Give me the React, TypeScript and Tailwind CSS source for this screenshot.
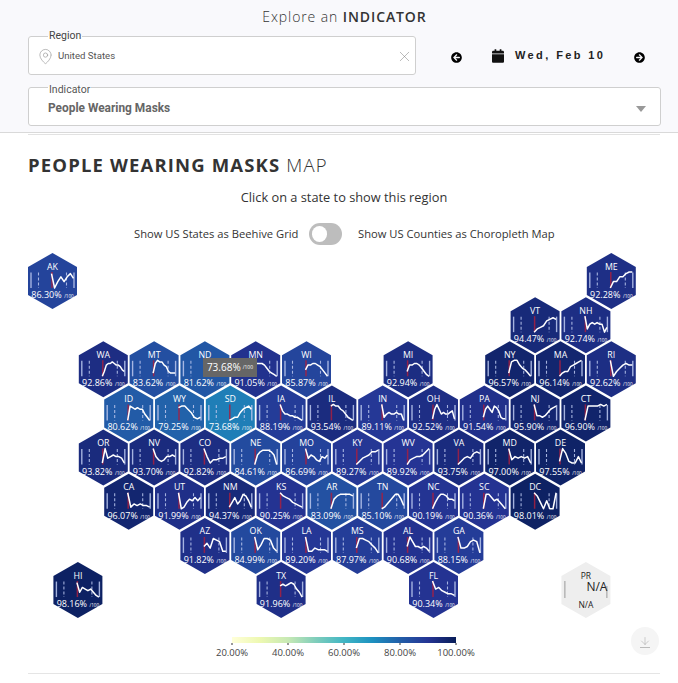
import React from "react";
import { FaArrowCircleLeft, FaArrowCircleRight, FaCalendar } from "react-icons/fa";
import { MapPin, X, ArrowDown } from "lucide-react";

type St = [string, number, number, number, number[]];

const STATES: St[] = [
  ["AK", 0, 0, 86.3, [1, 10, 6, 3, 6, 3, 1, 4]],
  ["ME", 22, 0, 92.28, [10, 6, 6, 3, 3, 1, 0, 0]],
  ["VT", 19, 1, 94.47, [10, 8, 7, 6, 3, 2, 1, 2]],
  ["NH", 21, 1, 92.74, [0, 8, 5, 4, 5, 4, 5, 5, 10, 7]],
  ["WA", 2, 2, 92.86, [10, 7, 3, 2, 2, 1, 2, 3, 3, 4, 6, 7]],
  ["MT", 4, 2, 83.62, [8, 2, 0, 1, 1, 3, 4, 7, 8, 8, 8]],
  ["ND", 6, 2, 81.62, [7, 3, 5, 6, 6, 7, 7, 8, 8]],
  ["MN", 8, 2, 91.05, [3, 2, 2, 2, 3, 5, 7, 8, 9, 10]],
  ["WI", 10, 2, 85.87, [6, 3, 3, 2, 2, 3, 4, 6, 8, 10]],
  ["MI", 14, 2, 92.94, [7, 3, 3, 2, 2, 3, 5, 7, 9, 10]],
  ["NY", 18, 2, 96.57, [8, 1, 0, 0, 3, 5, 6, 8, 10]],
  ["MA", 20, 2, 96.14, [10, 8, 7, 7, 4, 3, 2, 1, 0]],
  ["RI", 22, 2, 92.62, [0, 10, 7, 5, 3, 2, 3, 3]],
  ["ID", 3, 3, 80.62, [10, 1, 2, 3, 2, 3, 3, 6, 8, 10]],
  ["WY", 5, 3, 79.25, [2, 1, 1, 3, 5, 8, 9, 8]],
  ["SD", 7, 3, 73.68, [10, 9, 8, 8, 5, 3, 2, 1, 3]],
  ["IA", 9, 3, 88.19, [0, 4, 6, 6, 7, 7, 8, 8, 9, 10]],
  ["IL", 11, 3, 93.54, [1, 0, 1, 1, 3, 4, 6, 8, 9, 10]],
  ["IN", 13, 3, 89.11, [0, 8, 6, 5, 6, 6, 5, 6, 6, 10]],
  ["OH", 15, 3, 92.52, [9, 3, 0, 3, 6, 5, 6, 6, 5, 4, 9]],
  ["PA", 17, 3, 91.54, [8, 3, 1, 3, 5, 1, 2, 4, 8, 9, 9]],
  ["NJ", 19, 3, 95.9, [0, 7, 7, 8, 7, 5, 3, 2, 1]],
  ["CT", 21, 3, 96.9, [10, 1, 1, 1, 1, 0, 1, 0]],
  ["OR", 2, 4, 93.82, [9, 0, 6, 5, 4, 5, 5, 6, 9]],
  ["NV", 4, 4, 93.7, [0, 5, 7, 8, 7, 5, 5, 4, 5]],
  ["CO", 6, 4, 92.82, [0, 5, 9, 7, 7, 6, 6, 5]],
  ["NE", 8, 4, 84.61, [10, 4, 2, 1, 1, 1, 2, 4, 10]],
  ["MO", 10, 4, 86.69, [0, 6, 4, 5, 7, 8, 5, 6, 4]],
  ["KY", 12, 4, 89.27, [10, 8, 6, 5, 4, 2, 2, 1]],
  ["WV", 14, 4, 89.92, [10, 7, 6, 5, 5, 4, 2, 0]],
  ["VA", 16, 4, 93.75, [10, 8, 6, 5, 6, 3, 2, 3]],
  ["MD", 18, 4, 97.0, [0, 7, 5, 6, 5, 6, 5, 9]],
  ["DE", 20, 4, 97.55, [8, 0, 3, 8, 9, 9, 5, 9]],
  ["CA", 3, 5, 96.07, [0, 9, 7, 8, 7, 8, 8, 9]],
  ["UT", 5, 5, 91.99, [0, 10, 9, 6, 4, 5, 3, 5, 3]],
  ["NM", 7, 5, 94.37, [9, 6, 3, 7, 5, 1, 2, 5, 9]],
  ["KS", 9, 5, 90.25, [0, 2, 3, 4, 6, 7, 8, 9]],
  ["AR", 11, 5, 83.09, [10, 4, 2, 1, 1, 1, 1, 2]],
  ["TN", 13, 5, 85.1, [10, 9, 7, 5, 3, 1, 1, 4, 8]],
  ["NC", 15, 5, 90.19, [10, 6, 3, 1, 1, 2, 4, 4, 5]],
  ["SC", 17, 5, 90.36, [10, 1, 1, 3, 5, 4, 6, 8, 10]],
  ["DC", 19, 5, 98.01, [0, 2, 6, 10, 5, 10, 10, 0]],
  ["AZ", 6, 6, 91.82, [6, 4, 7, 1, 2, 3, 9, 9]],
  ["OK", 8, 6, 84.99, [0, 8, 5, 1, 1, 2, 7, 9]],
  ["LA", 10, 6, 89.2, [0, 9, 9, 7, 8, 8, 8, 9]],
  ["MS", 12, 6, 87.97, [7, 1, 1, 2, 3, 5, 7, 10]],
  ["AL", 14, 6, 90.68, [6, 0, 3, 6, 6, 7, 6, 7, 9]],
  ["GA", 16, 6, 88.15, [0, 7, 7, 6, 3, 2, 3, 10]],
  ["TX", 9, 7, 91.96, [3, 2, 3, 2, 1, 2, 5, 7, 10]],
  ["FL", 15, 7, 90.34, [0, 5, 4, 6, 7, 8, 8, 9]],
  ["HI", 1, 7, 98.16, [1, 7, 4, 5, 6, 5, 7, 9, 10]],
];

const STOPS = [
  [255, 255, 217],
  [237, 248, 177],
  [199, 233, 180],
  [127, 205, 187],
  [65, 182, 196],
  [29, 145, 192],
  [34, 94, 168],
  [37, 52, 148],
  [8, 29, 88],
];

function colorFor(v: number) {
  const t = Math.min(0.9999, Math.max(0, (v - 20) / 80)) * 8;
  const i = Math.floor(t);
  const f = t - i;
  const c = STOPS[i].map((a, k) => Math.round(a + (STOPS[i + 1][k] - a) * f));
  return `rgb(${c[0]},${c[1]},${c[2]})`;
}

const HEX = "0,-28 24.5,-14 24.5,14 0,28 -24.5,14 -24.5,-14";

function spark(vals: number[]) {
  const x0 = -1;
  const x1 = 21;
  return vals
    .map((v, i) => {
      const x = x0 + ((x1 - x0) * i) / (vals.length - 1);
      const y = -9 + (v / 10) * 16;
      return `${x.toFixed(1)},${y.toFixed(1)}`;
    })
    .join(" ");
}

function Hex({ st }: { st: St }) {
  const [name, k, r, v, vals] = st;
  const x = 52.5 + 25.4 * k;
  const y = 280 + 44.15 * r;
  return (
    <g transform={`translate(${x} ${y})`}>
      <polygon points={HEX} fill={colorFor(v)} />
      <g stroke="#b4c1ea" opacity={0.9}>
        <line x1={-21.5} x2={-21.5} y1={-8.5} y2={7} strokeWidth={1.4} />
        <line x1={21.5} x2={21.5} y1={-8.5} y2={7} strokeWidth={1.4} />
        <line x1={-14} x2={-14} y1={-8.5} y2={7} strokeWidth={1.1} strokeDasharray="3 2" />
        <line x1={14} x2={14} y1={-8.5} y2={7} strokeWidth={1.1} strokeDasharray="3 2" />
      </g>
      <line x1={-0.5} x2={-0.5} y1={-9} y2={7} stroke="#a82040" strokeWidth={1.5} opacity={0.85} />
      <polyline points={spark(vals)} fill="none" stroke="#ffffff" strokeWidth={1.5} strokeLinejoin="round" />
      <text y={-11.5} textAnchor="middle" fontSize={8.8} fill="#ffffff">
        {name}
      </text>
      <text y={17} textAnchor="middle" fill="#ffffff">
        <tspan fontSize={9}>{v.toFixed(2)}%</tspan>
        <tspan fontSize={4.6} dx={2.5}>
          /100
        </tspan>
      </text>
    </g>
  );
}

function BeehiveMap() {
  return (
    <svg
      viewBox="0 250 678 422"
      width={678}
      height={422}
      className="block font-['Open_Sans',sans-serif]"
    >
      <defs>
        <linearGradient id="legend" x1="0" x2="1" y1="0" y2="0">
          {STOPS.map((c, i) => (
            <stop key={i} offset={i / 8} stopColor={`rgb(${c[0]},${c[1]},${c[2]})`} />
          ))}
        </linearGradient>
      </defs>
      {STATES.map((s) => (
        <Hex key={s[0]} st={s} />
      ))}
      <g transform="translate(585.9 589)">
        <polygon points={HEX} fill="#eeeeee" />
        <line x1={-21} x2={-21} y1={-9} y2={8} stroke="#999999" strokeWidth={1} />
        <line x1={21} x2={21} y1={-4} y2={8} stroke="#999999" strokeWidth={1} />
        <text y={-11.5} textAnchor="middle" fontSize={8.5} fill="#222222">
          PR
        </text>
        <text x={11} y={0.5} textAnchor="middle" fontSize={12} fill="#222222">
          N/A
        </text>
        <text y={18} textAnchor="middle" fontSize={8.5} fill="#222222">
          N/A
        </text>
      </g>
      <rect x={232} y={636} width={224} height={6} fill="url(#legend)" />
      {[
        [232, "20.00%"],
        [288, "40.00%"],
        [344, "60.00%"],
        [400, "80.00%"],
        [456, "100.00%"],
      ].map(([x, t]) => (
        <g key={t as string}>
          <line x1={x as number} x2={x as number} y1={642} y2={644} stroke="#333333" />
          <text x={x as number} y={655} textAnchor="middle" fontSize={9.5} fill="#444444">
            {t}
          </text>
        </g>
      ))}
    </svg>
  );
}

export default function App() {
  return (
    <div className="w-[678px] h-[683px] overflow-hidden bg-white font-['Open_Sans',sans-serif]">
      <section className="h-[133px] bg-[#f9f9fc] border-b border-[#d9d9d9] pl-[28px] pr-[17px]">
        <h2 className="h-[30px] pt-[7px] leading-[20px] text-center text-[14px] tracking-[0.9px] font-light text-[#333333]">
          Explore an <span className="font-semibold">INDICATOR</span>
        </h2>
        <div className="flex h-[45px]">
          <fieldset className="w-[388px] h-[45px] border border-[#cfcfcf] rounded-[3px] bg-white pl-[19px] font-['Roboto',sans-serif]">
            <legend className="text-[10.5px] leading-[12px] px-[1px] text-[#444444]">Region</legend>
            <div className="flex items-center h-[27px] pt-[1px] -ml-[11px]">
              <MapPin size={17} strokeWidth={0.8} className="text-[#888888]" />
              <span className="ml-[4px] text-[9.6px] text-[#555555]">United States</span>
              <X size={17} strokeWidth={0.7} className="ml-auto mr-[2px] text-[#777777]" />
            </div>
          </fieldset>
          <div className="flex items-start font-['Liberation_Sans',sans-serif]">
            <FaArrowCircleLeft className="ml-[35px] mt-[22px] w-[11px] h-[11px] text-black" />
            <FaCalendar className="ml-[30px] mt-[19px] w-[12px] h-[14px] text-[#111111]" />
            <span className="ml-[11px] mt-[18px] leading-[14px] text-[11px] font-bold tracking-[2.4px] text-[#222222] whitespace-nowrap">
              Wed, Feb 10
            </span>
            <FaArrowCircleRight className="ml-[29px] mt-[22px] w-[11px] h-[11px] text-black" />
          </div>
        </div>
        <fieldset className="mt-[6px] w-[633px] h-[45px] border border-[#cfcfcf] rounded-[3px] bg-white pl-[19px] font-['Roboto',sans-serif]">
          <legend className="text-[10.5px] leading-[12px] px-[1px] text-[#555555] translate-y-[3px]">Indicator</legend>
          <div className="flex items-center h-[28px] pt-[3px]">
            <span className="text-[11.9px] font-bold text-[#666666]">People Wearing Masks</span>
            <span className="ml-auto mr-[14px] w-0 h-0 border-x-[5px] border-x-transparent border-t-[6px] border-t-[#999999]" />
          </div>
        </fieldset>
      </section>
      <div className="ml-[28px] mr-[18px] mt-[1px] h-px bg-[#e2e2e2]" />
      <h1 className="mx-[28px] mt-[16px] h-[28px] leading-[28px] text-[18.5px] tracking-[1.15px] font-bold text-[#333333] whitespace-nowrap">
        PEOPLE WEARING MASKS <span className="font-light">MAP</span>
      </h1>
      <p className="mt-[8px] h-[20px] leading-[20px] text-center text-[12.8px] text-[#333333] pl-[10px]">
        Click on a state to show this region
      </p>
      <div className="mt-[16px] h-[22px] flex items-center text-[11.2px] text-[#333333] whitespace-nowrap">
        <span className="ml-[134px] w-[175px]">Show US States as Beehive Grid</span>
        <span className="w-[33px] h-[22px] rounded-full bg-[#bdbdbd] flex items-center pl-[3px]">
          <span className="w-[15px] h-[16px] rounded-full bg-white" />
        </span>
        <span className="ml-[16px]">Show US Counties as Choropleth Map</span>
      </div>
      <div className="relative mt-[6px] h-[422px]">
        <BeehiveMap />
        <div className="absolute left-[203px] top-[107px] w-[54px] h-[19px] bg-[#666666] flex items-center justify-center text-white whitespace-nowrap">
          <span className="text-[10px]">73.68%</span>
          <span className="text-[5px] ml-[2px]">/100</span>
        </div>
        <div className="absolute left-[631px] top-[376px] w-[28px] h-[28px] rounded-full bg-[#f5f5f5] flex flex-col items-center justify-center text-[#999999]">
          <ArrowDown size={12} strokeWidth={0.9} />
          <span className="w-[10px] h-px bg-[#bbbbbb]" />
        </div>
      </div>
      <div className="ml-[28px] mr-[18px] h-px bg-[#e5e5e5]" />
    </div>
  );
}
